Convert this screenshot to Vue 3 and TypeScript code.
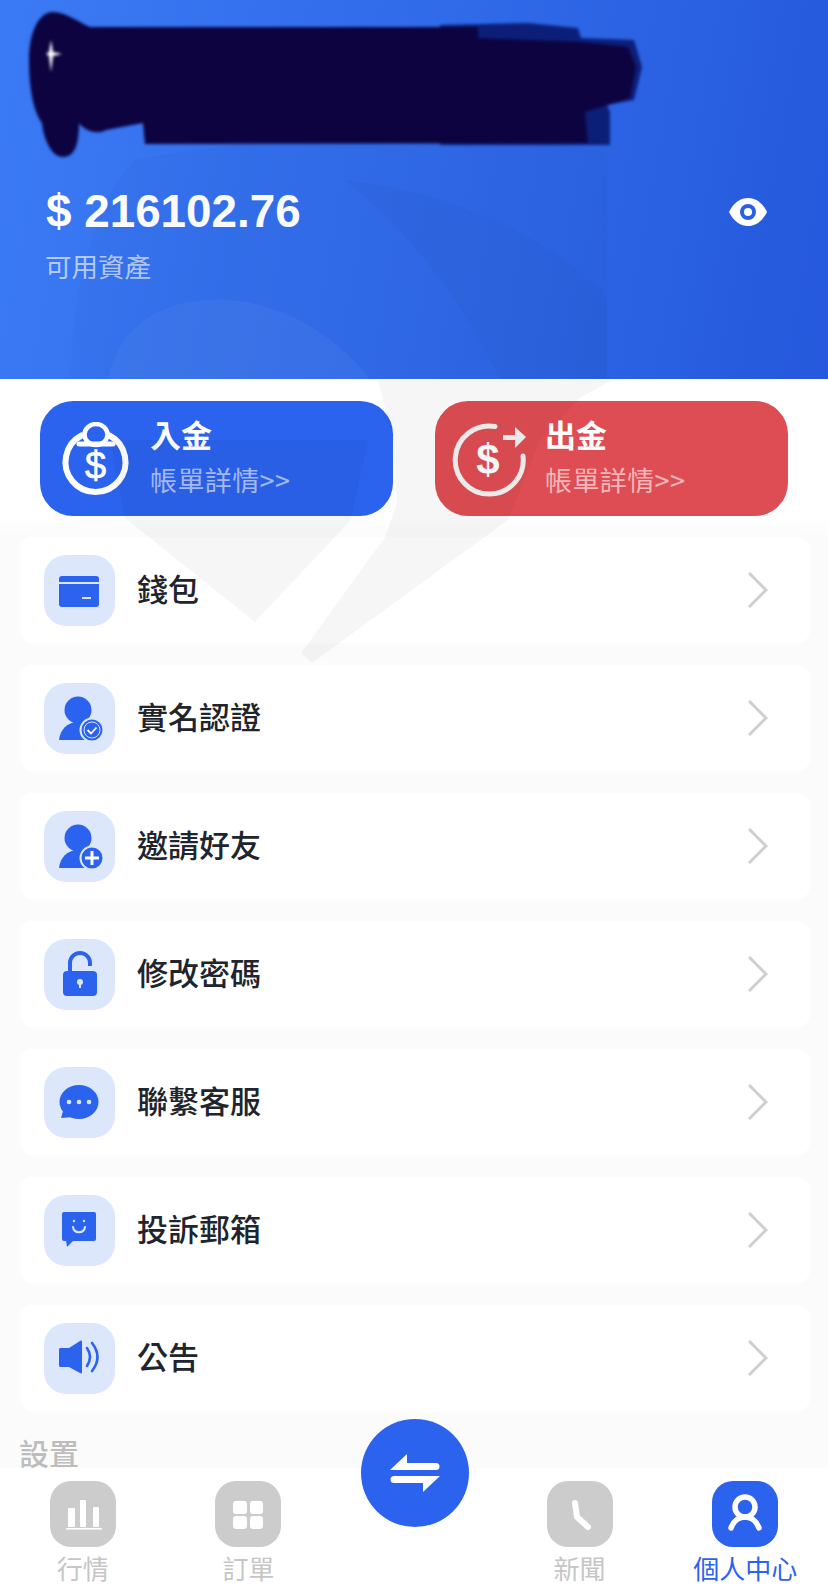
<template>
  <div class="page">
    <header class="hero">
      <!-- scribbled-over account name -->
      <svg class="scribble" width="660" height="170" viewBox="0 0 660 170">
        <path fill="#0c1f78" d="M528 23 L578 28 L581 38 L634 40 L642 67 L634 100 L607 105 L610 112 L610 145 L440 145 L440 25 Z" />
        <path fill="#0d0340" d="M53 12 C40 12 29 30 29 60 C29 90 34 112 42 123 C43 135 50 157 63 157 C74 157 79 146 79 123 C84 131 98 135 106 130 L143 123 L145 144 L588 143 L585 112 L630 98 L636 67 L628 47 L581 42 L478 38 L478 27 L90 27 C78 22 66 12 53 12 Z" />
        <path fill="#fff" d="M51 40 L53 52 L62 54 L53 56 L51 72 L49 56 L46 54 L49 52 Z" />
      </svg>
      <div class="balance-row">
        <div class="balance">$ 216102.76</div>
        <svg class="eye" width="38" height="28" viewBox="0 0 38 28">
          <path fill="#fff" d="M0 14 C5 4 12 0 19 0 C26 0 33 4 38 14 C33 24 26 28 19 28 C12 28 5 24 0 14 Z" />
          <circle cx="19" cy="14" r="8" fill="#2a60e2" />
          <circle cx="19" cy="14" r="4" fill="#fff" />
        </svg>
      </div>
      <div class="balance-label">可用資產</div>
    </header>

    <div class="cash-actions">
      <div class="cash-btn cash-in">
        <svg class="cash-icon" width="76" height="76" viewBox="0 0 76 76">
          <g fill="none" stroke="#fff" stroke-linecap="round">
            <path stroke-width="6" d="M23.5 13.5 A30 30 0 1 0 51.5 13.5" />
            <ellipse cx="38" cy="12.5" rx="11.5" ry="10.5" stroke-width="4.5" />
            <path stroke-width="5" d="M21 22 L55 22" />
          </g>
          <text x="37.5" y="57" class="dollar thin" font-size="38">$</text>
        </svg>
        <div>
          <div class="cash-title">入金</div>
          <div class="cash-sub">帳單詳情&gt;&gt;</div>
        </div>
      </div>
      <div class="cash-btn cash-out">
        <svg class="cash-icon" width="76" height="76" viewBox="0 0 76 76">
          <path fill="none" stroke="#f3f3f3" stroke-width="5" stroke-linecap="round" d="M44 4.5 A34 34 0 1 0 72 34" />
          <path fill="#f3f3f3" d="M52 13 L64 13 L64 5 L75 15 L64 26 L64 18 L52 18 Z" />
          <text x="37" y="52" class="dollar" font-size="42">$</text>
        </svg>
        <div>
          <div class="cash-title">出金</div>
          <div class="cash-sub">帳單詳情&gt;&gt;</div>
        </div>
      </div>
    </div>

    <ul class="menu">
      <li v-for="item in menu" :key="item.icon" class="menu-row">
        <span class="menu-icon">
          <svg width="71" height="71" viewBox="0 0 71 71">
            <template v-if="item.icon === 'wallet'">
              <rect x="15" y="21" width="40" height="31" rx="3" fill="#2b63ee" />
              <rect x="15" y="27" width="40" height="2" fill="#dde7fb" />
              <rect x="38" y="42" width="9" height="2" fill="#dde7fb" />
            </template>
            <template v-else-if="item.icon === 'verify' || item.icon === 'invite'">
              <circle cx="34" cy="27" r="13.5" fill="#2b63ee" />
              <path fill="#2b63ee" d="M15 57 C16 47 23 39 34 39 C44 39 50 43 52 47 L52 57 Z" />
              <circle cx="48" cy="47" r="11.5" fill="#2b63ee" stroke="#dde7fb" stroke-width="2" />
              <template v-if="item.icon === 'verify'">
                <circle cx="48" cy="47" r="8" fill="none" stroke="#dde7fb" stroke-width="1" />
                <path fill="none" stroke="#fff" stroke-width="1.8" d="M43.5 47 L47 50.5 L52.5 44.5" />
              </template>
              <path v-else fill="none" stroke="#fff" stroke-width="3" d="M41 47 L55 47 M48 40 L48 54" />
            </template>
            <template v-else-if="item.icon === 'lock'">
              <path fill="none" stroke="#2b63ee" stroke-width="4" d="M26 33 L26 24 A10 10 0 0 1 46 24 L46 27" />
              <rect x="19" y="32" width="34" height="25" rx="4" fill="#2b63ee" />
              <circle cx="36" cy="43" r="3" fill="#dde7fb" />
              <rect x="35" y="44" width="2" height="5" fill="#dde7fb" />
            </template>
            <template v-else-if="item.icon === 'chat'">
              <ellipse cx="35" cy="35" rx="19.5" ry="17" fill="#2b63ee" />
              <path fill="#2b63ee" d="M20 41 L17 51 L30 50 Z" />
              <circle cx="25" cy="35" r="2.3" fill="#dde7fb" />
              <circle cx="35" cy="35" r="2.3" fill="#dde7fb" />
              <circle cx="45" cy="35" r="2.3" fill="#dde7fb" />
            </template>
            <template v-else-if="item.icon === 'mail'">
              <rect x="18" y="17" width="34" height="29" rx="2" fill="#2b63ee" />
              <path fill="#2b63ee" d="M22 45 L23 52 L30 45 Z" />
              <path fill="none" stroke="#dde7fb" stroke-width="2" stroke-linecap="round" d="M29 32 C30 39 40 39 41 32" />
              <circle cx="30" cy="26" r="1.2" fill="#dde7fb" />
              <circle cx="40" cy="26" r="1.2" fill="#dde7fb" />
            </template>
            <template v-else>
              <path fill="#2b63ee" d="M15 27 C15 25 16 25 17 25 L25 25 L36 18 C38 17 38 18 38 19 L38 49 C38 50 38 51 36 50 L25 44 L17 44 C16 44 15 44 15 42 Z" />
              <path fill="none" stroke="#2b63ee" stroke-width="2.6" stroke-linecap="round" d="M43 25 Q49 34 43 43 M48 20 Q59 34 48 48" />
            </template>
          </svg>
        </span>
        <span class="menu-label">{{ item.label }}</span>
        <svg class="chevron" width="20" height="36" viewBox="0 0 20 36">
          <path fill="none" stroke="#cfcfcf" stroke-width="3" d="M1 1 L18 18 L1 35" />
        </svg>
      </li>
    </ul>

    <div class="section-title">設置</div>

    <nav class="tabbar">
      <div v-for="tab in tabs" :key="tab.label" class="tab" :class="{ active: tab.active }">
        <template v-if="tab.icon">
          <span class="tab-icon">
            <svg width="66" height="66" viewBox="0 0 66 66">
              <g v-if="tab.icon === 'chart'" fill="#fff">
                <rect x="18" y="27" width="7" height="19" rx="1" />
                <rect x="30" y="19" width="6" height="27" rx="1" />
                <rect x="43" y="26" width="6" height="20" rx="1" />
                <rect x="16" y="47" width="36" height="1.6" />
              </g>
              <g v-else-if="tab.icon === 'grid'" fill="#fff">
                <rect x="18" y="20" width="14" height="13" rx="3" />
                <rect x="35" y="20" width="13" height="13" rx="3" />
                <rect x="18" y="35" width="14" height="13" rx="3" />
                <rect x="35" y="35" width="13" height="13" rx="3" />
              </g>
              <path v-else-if="tab.icon === 'clock'" fill="none" stroke="#fff" stroke-width="6" stroke-linecap="round" stroke-linejoin="round" d="M28 22 L30 36 L41 46" />
              <g v-else fill="none" stroke="#fff" stroke-linecap="round">
                <circle cx="33" cy="26" r="10" stroke-width="5.5" />
                <path stroke-width="5.5" d="M19 47 C22 39 27 36 33 36 C39 36 44 39 47 47" />
              </g>
            </svg>
          </span>
          <span class="tab-label">{{ tab.label }}</span>
        </template>
      </div>
      <div class="swap-btn">
        <svg width="108" height="108" viewBox="0 0 108 108">
          <path fill="#fff" d="M29 51 L46 35 L46 44 L75 44 A3.5 3.5 0 0 1 75 51 Z" />
          <path fill="#fff" d="M79 57 L62 73 L62 64 L33 64 A3.5 3.5 0 0 1 33 57 Z" />
        </svg>
      </div>
    </nav>

    <!-- faint logo watermark lying over the upper half of the page -->
    <svg class="watermark" width="828" height="680" viewBox="0 0 828 680">
      <g class="on-hero">
        <path d="M71 379 C71 290 95 200 135 160 C280 130 500 130 607 153 L607 379 Z" />
        <path d="M343 180 C450 190 560 240 607 300 L607 379 L500 379 C460 300 410 230 343 180 Z" />
        <path fill="#fff" fill-opacity="0.04" d="M108 379 C120 320 170 296 230 300 C290 305 340 340 370 379 Z" />
      </g>
      <path d="M125 518 L255 622 L351 520 L368 440 L110 440 Z" />
      <path d="M378 380 L612 380 L580 398 L540 440 L508 520 L312 663 L301 653 L385 537 L397 503 L393 440 Z" />
    </svg>
  </div>
</template>

<script setup lang="ts">
interface MenuItem {
  icon: string;
  label: string;
}

interface Tab {
  icon: string;
  label: string;
  active?: boolean;
}

const menu: MenuItem[] = [
  { icon: "wallet", label: "錢包" },
  { icon: "verify", label: "實名認證" },
  { icon: "invite", label: "邀請好友" },
  { icon: "lock", label: "修改密碼" },
  { icon: "chat", label: "聯繫客服" },
  { icon: "mail", label: "投訴郵箱" },
  { icon: "speaker", label: "公告" },
];

// the empty middle slot sits under the round swap button
const tabs: Tab[] = [
  { icon: "chart", label: "行情" },
  { icon: "grid", label: "訂單" },
  { icon: "", label: "" },
  { icon: "clock", label: "新聞" },
  { icon: "user", label: "個人中心", active: true },
];
</script>

<style scoped>
.page {
  position: relative;
  width: 828px;
  height: 1586px;
  overflow: hidden;
  background: #fbfbfb;
  font-family: "Noto Sans CJK TC", "Noto Sans", sans-serif;
}

.hero {
  position: relative;
  height: 379px;
  box-sizing: border-box;
  padding: 187px 61px 0 46px;
  background: linear-gradient(100deg, #3b7af5 0%, #2f69e8 55%, #2558dc 100%);
  color: #fff;
}

.scribble {
  position: absolute;
  left: 0;
  top: 0;
  filter: blur(1.5px);
}

.balance-row {
  display: flex;
  align-items: center;
  justify-content: space-between;
}

.balance {
  font-family: "Liberation Sans", Arial, sans-serif;
  font-size: 45.8px;
  font-weight: 700;
  line-height: 50px;
}

.balance-label {
  margin-top: 11px;
  margin-left: -1px;
  font-size: 26.5px;
  line-height: 36px;
  color: rgba(255, 255, 255, 0.65);
}

.cash-actions {
  display: flex;
  justify-content: space-between;
  padding: 22px 40px 0;
  background: #fff;
}

.cash-btn {
  display: flex;
  align-items: center;
  width: 353px;
  height: 115px;
  box-sizing: border-box;
  border-radius: 33px;
  color: #fff;
}

.cash-in {
  gap: 16px;
  padding-left: 18px;
  background: #2b63ee;
}

.cash-out {
  gap: 18px;
  padding-left: 16px;
  background: #de4d53;
}

.cash-icon {
  flex-shrink: 0;
  margin-top: 3px;
}

.dollar {
  fill: #fff;
  font-family: "Liberation Sans", Arial, sans-serif;
  font-weight: 700;
  text-anchor: middle;
}

.dollar.thin {
  font-weight: 400;
  stroke: #fff;
  stroke-width: 0.7;
}

.cash-title {
  margin-top: -6px;
  font-size: 31px;
  font-weight: 700;
  line-height: 40px;
}

.cash-sub {
  margin-top: 8px;
  font-size: 27px;
  letter-spacing: 0.4px;
  line-height: 36px;
  color: rgba(255, 255, 255, 0.6);
  white-space: nowrap;
}

.menu {
  margin: 0;
  padding: 21px 18px 0 20px;
  list-style: none;
  background: linear-gradient(#fff, #fbfbfb 20px);
}

.menu-row {
  display: flex;
  align-items: center;
  height: 106px;
  margin-bottom: 22px;
  padding: 0 42px 0 24px;
  border-radius: 14px;
  background: #fff;
  box-shadow: 0 0 6px rgba(255, 255, 255, 0.9);
}

.menu-icon {
  display: block;
  width: 71px;
  height: 71px;
  flex-shrink: 0;
  border-radius: 22px;
  background: #dde7fb;
}

.menu-label {
  flex: 1;
  margin-top: -5px;
  margin-left: 22px;
  font-size: 31px;
  font-weight: 500;
  color: #20242c;
}

.section-title {
  height: 37px;
  margin-top: -2px;
  padding-left: 19px;
  font-size: 30px;
  font-weight: 500;
  line-height: 42px;
  color: #bdbdbd;
}

.tabbar {
  position: relative;
  display: grid;
  grid-template-columns: repeat(5, 1fr);
  height: 118px;
  padding-top: 13px;
  box-sizing: border-box;
  background: #fff;
}

.tab {
  display: flex;
  flex-direction: column;
  align-items: center;
  color: #c6c6c6;
}

.tab-icon {
  display: block;
  width: 66px;
  height: 66px;
  border-radius: 21px;
  background: #cccccc;
}

.tab-label {
  margin-top: 3px;
  font-size: 26px;
  line-height: 36px;
  white-space: nowrap;
}

.tab.active {
  color: #2b63ee;
}

.tab.active .tab-icon {
  background: #2b63ee;
}

.swap-btn {
  position: absolute;
  left: 361px;
  top: -49px;
  width: 108px;
  height: 108px;
  border-radius: 50%;
  background: #2b63ee;
}

.watermark {
  position: absolute;
  left: 0;
  top: 0;
  fill: #000;
  fill-opacity: 0.035;
  pointer-events: none;
}

.on-hero {
  fill-opacity: 0.018;
}
</style>
